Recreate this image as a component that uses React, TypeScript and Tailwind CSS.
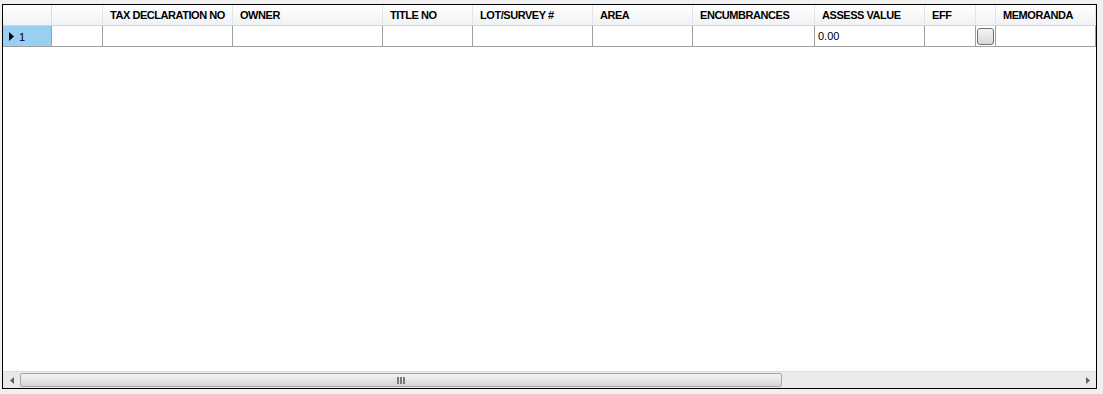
import React from 'react';

interface Column {
  label: string;
  width: number;
}

const columns: Column[] = [
  { label: '', width: 51 },
  { label: 'TAX DECLARATION NO', width: 130 },
  { label: 'OWNER', width: 150 },
  { label: 'TITLE NO', width: 90 },
  { label: 'LOT/SURVEY #', width: 120 },
  { label: 'AREA', width: 100 },
  { label: 'ENCUMBRANCES', width: 122 },
  { label: 'ASSESS VALUE', width: 110 },
  { label: 'EFF', width: 51 },
  { label: '', width: 20 },
  { label: 'MEMORANDA', width: 100 },
];

function CellButton() {
  return (
    <div className="w-[17px] h-[17px] rounded-[3px] border border-[#707070] bg-gradient-to-b from-[#f4f4f4] to-[#d9d9d9]" />
  );
}

export default function App() {
  return (
    <div
      className="w-[1103px] h-[394px] bg-[#f0f0f0] pt-[4px] pl-[2px]"
      style={{ fontFamily: '"Liberation Sans", Arial, sans-serif' }}
    >
      <div className="w-[1095px] h-[385px] border border-black bg-white flex flex-col">
        {/* header row */}
        <div className="flex h-[21px] border-b border-[#d5d5d5] bg-gradient-to-b from-white to-[#f1f2f4]">
          <div className="w-[49px] shrink-0 border-r border-[#dcdcdc]" />
          {columns.map((col, i) => (
            <div
              key={i}
              className="shrink-0 flex items-center pl-[7px] pt-[1px] border-r border-[#e4e4e4] text-[11px] tracking-[-0.45px] font-bold text-black whitespace-nowrap overflow-hidden"
              style={{ width: col.width }}
            >
              {col.label}
            </div>
          ))}
        </div>

        {/* data row */}
        <div className="flex h-[21px] border-b border-[#a0a0a0]">
          <div className="w-[49px] shrink-0 border-r border-[#a0a0a0] flex items-center bg-[#99cff1] pl-[6px]">
            <svg width="5" height="9" viewBox="0 0 5 9" className="mr-[5px]">
              <path d="M0 0 L5 4.5 L0 9 Z" fill="#000" />
            </svg>
            <span className="text-[11px] text-black mt-[2px]">1</span>
          </div>
          {columns.map((col, i) => (
            <div
              key={i}
              className="shrink-0 flex items-center border-r border-[#a0a0a0] text-[11px] text-black"
              style={{ width: col.width }}
            >
              {col.label === 'ASSESS VALUE' && <span className="pl-[3px]">0.00</span>}
              {i === 9 && (
                <div className="pl-[1px]">
                  <CellButton />
                </div>
              )}
            </div>
          ))}
        </div>

        <div className="flex-1" />

        {/* horizontal scrollbar */}
        <div className="h-[17px] flex items-stretch bg-[#e8e8e8] border-t border-[#dedede]">
          <div className="w-[17px] shrink-0 flex items-center justify-center">
            <svg width="4" height="7" viewBox="0 0 4 7">
              <path d="M4 0 L0 3.5 L4 7 Z" fill="#606060" />
            </svg>
          </div>
          <div className="w-[762px] shrink-0 my-[1px] rounded-[2px] border border-[#a7a7a7] bg-gradient-to-b from-[#f2f2f2] via-[#e6e6e6] to-[#d4d4d4] flex items-center justify-center">
            <div className="flex gap-[1px]">
              <div className="w-[2px] h-[7px] bg-[#7a7a7a]" />
              <div className="w-[2px] h-[7px] bg-[#7a7a7a]" />
              <div className="w-[2px] h-[7px] bg-[#7a7a7a]" />
            </div>
          </div>
          <div className="flex-1 bg-[#ebebeb]" />
          <div className="w-[17px] shrink-0 flex items-center justify-center bg-[#ebebeb]">
            <svg width="4" height="7" viewBox="0 0 4 7">
              <path d="M0 0 L4 3.5 L0 7 Z" fill="#606060" />
            </svg>
          </div>
        </div>
      </div>
    </div>
  );
}
